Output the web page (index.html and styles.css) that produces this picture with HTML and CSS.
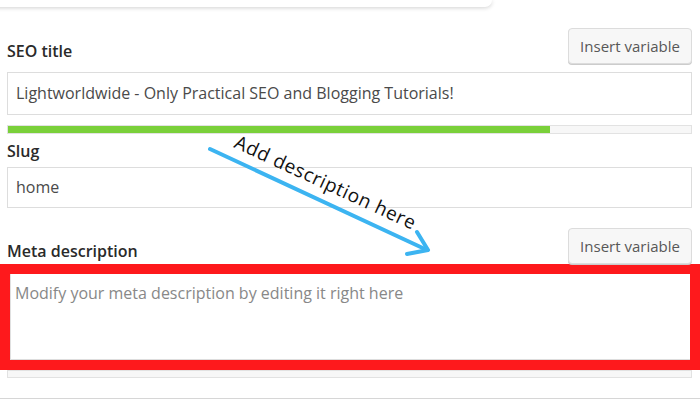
FILE: index.html
```html
<!DOCTYPE html>
<html>

<head>
    <meta charset="utf-8" />
    <title>SEO settings</title>
    <link rel="stylesheet" href="styles.css">
</head>

<body>
    <div class="topCard"></div>

    <div class="fieldHead">
        <label class="fieldLabel">SEO title</label>
        <button class="insertBtn">Insert variable</button>
    </div>
    <div class="textInput">Lightworldwide - Only Practical SEO and Blogging Tutorials!</div>
    <div class="progress"><div class="progressFill"></div></div>

    <div class="slugHead">
        <label class="fieldLabel">Slug</label>
    </div>
    <div class="textInput slugInput">home</div>

    <div class="fieldHead metaHead">
        <label class="fieldLabel">Meta description</label>
        <button class="insertBtn">Insert variable</button>
    </div>
    <div class="redMark">
        <div class="metaArea">Modify your meta description by editing it right here</div>
    </div>
    <div class="progress metaProgress"></div>
    <div class="bottomLine"></div>

    <!-- annotation drawn over the form -->
    <svg class="note" width="700" height="400" viewBox="0 0 700 400">
        <line x1="210" y1="149" x2="427" y2="250" stroke="#3cb4f1" stroke-width="4" stroke-linecap="round" />
        <polyline points="417,232 428,250 407,254" fill="none" stroke="#3cb4f1" stroke-width="4" stroke-linecap="round" stroke-linejoin="round" />
        <text x="233" y="147" transform="rotate(24.8 233 147)" textLength="197" class="noteText">Add description here</text>
    </svg>
</body>

</html>
```

FILE: styles.css
```css
* {
    box-sizing: border-box;
}

body {
    margin: 0px;
    padding: 0px 8px 0px 7px;
    width: 700px;
    height: 400px;
    overflow: hidden;
    position: relative;
    font-family: "Open Sans", "Liberation Sans", sans-serif;
    color: #1e1e1e;
    background-color: #fff;
}

.topCard {
    width: 502px;
    height: 7px;
    margin-left: -17px;
    background-color: #fff;
    border-radius: 0px 0px 10px 10px;
    box-shadow: 0px 1px 4px rgba(0, 0, 0, 0.18);
}

.fieldHead {
    display: flex;
    justify-content: space-between;
    align-items: flex-end;
    margin-top: 21px;
}

.fieldLabel {
    font-size: 16px;
    font-weight: 600;
    color: #2a2a2a;
    line-height: 20px;
    padding-bottom: 3px;
}

.insertBtn {
    width: 124px;
    height: 36px;
    padding: 0px;
    font-family: "Open Sans", "Liberation Sans", sans-serif;
    font-size: 15px;
    color: #585858;
    background-color: #f7f7f7;
    border: 1px solid #dcdcdc;
    border-radius: 4px;
    box-shadow: 0px 1px 0px #ccc;
}

.textInput {
    margin-top: 8px;
    height: 43px;
    padding: 0px 8px;
    border: 1px solid #ddd;
    font-size: 16px;
    line-height: 41px;
    color: #4a4a4a;
}

.progress {
    margin-top: 10px;
    height: 9px;
    background-color: #f7f7f7;
    border: 1px solid #e2e2e2;
}

.progressFill {
    width: 79.4%;
    height: 7px;
    background-color: #7ad03a;
}

.slugHead {
    margin-top: 6px;
}

.slugHead .fieldLabel {
    padding-bottom: 0px;
}

.slugInput {
    margin-top: 5px;
    height: 41px;
    line-height: 39px;
}

.metaHead {
    margin-top: 20px;
}

.redMark {
    margin: 0px -8px 0px -7px;
    border: 10px solid #fe191c;
}

.metaArea {
    height: 86px;
    padding: 8px 4px 0px 4px;
    border-left: 1px solid #e0e0e0;
    border-bottom: 1px solid #ddd;
    font-size: 16px;
    line-height: 22px;
    color: #888;
}

.metaProgress {
    margin-top: 0px;
    height: 8px;
}

.bottomLine {
    margin: 20px -8px 0px -7px;
    height: 1px;
    background-color: #d6d6d6;
}

.note {
    position: absolute;
    top: 0px;
    left: 0px;
    pointer-events: none;
}

.noteText {
    font-family: "Open Sans", "Liberation Sans", sans-serif;
    font-size: 19px;
    fill: #111;
}
```
